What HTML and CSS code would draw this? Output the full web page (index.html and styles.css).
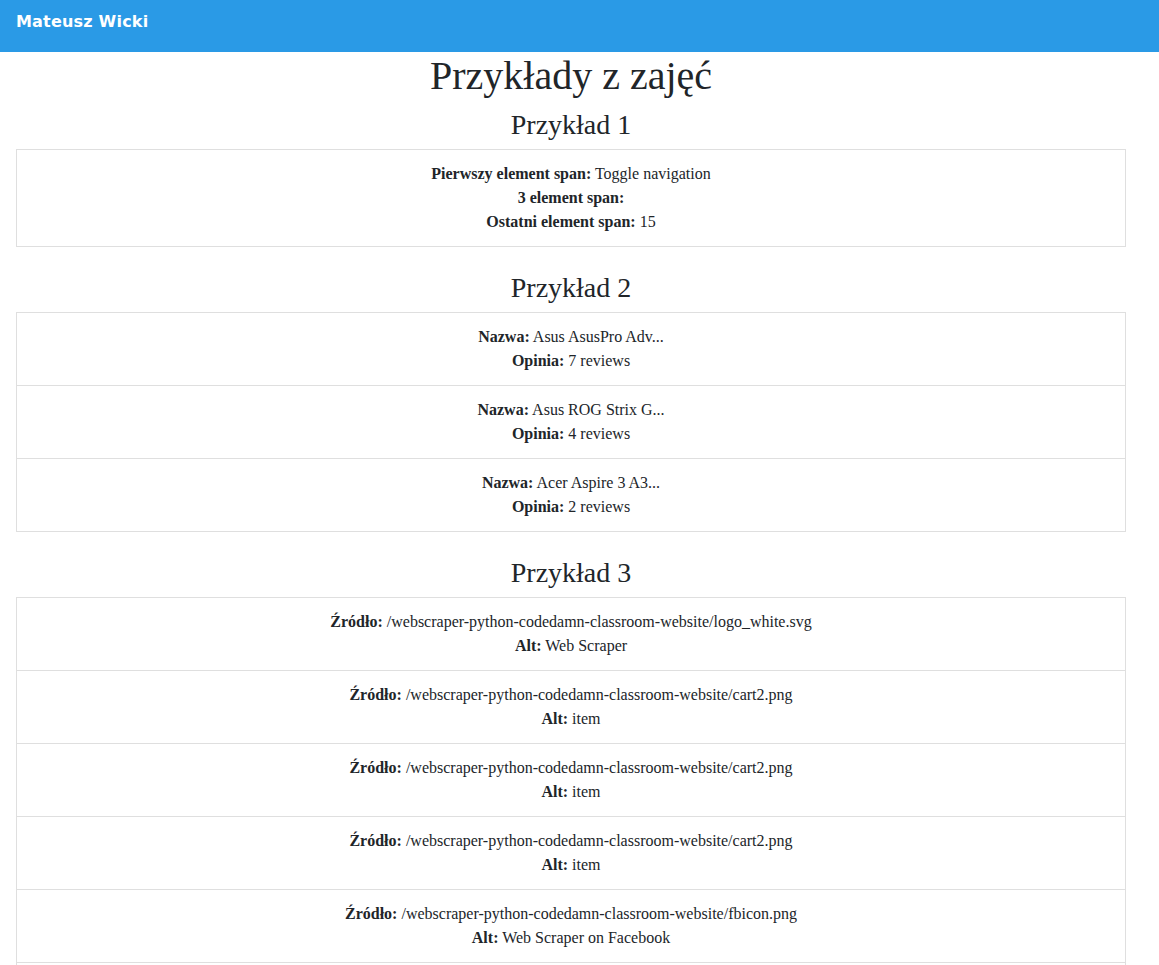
FILE: index.html
```html
<!DOCTYPE html>
<html lang="pl">
<head>
<meta charset="utf-8">
<title>Przykłady z zajęć</title>
<link rel="stylesheet" href="styles.css">
</head>
<body>
<nav class="navbar"><span class="brand">Mateusz Wicki</span></nav>
<main class="content">
  <h1 class="title">Przykłady z zajęć</h1>

  <section class="example">
    <h3 class="example-title">Przykład 1</h3>
    <ul class="list-group">
      <li class="list-item">
        <div><b>Pierwszy element span:</b> Toggle navigation</div>
        <div><b>3 element span:</b> </div>
        <div><b>Ostatni element span:</b> 15</div>
      </li>
    </ul>
  </section>

  <section class="example">
    <h3 class="example-title">Przykład 2</h3>
    <ul class="list-group">
      <li class="list-item">
        <div><b>Nazwa:</b> Asus AsusPro Adv...</div>
        <div><b>Opinia:</b> 7 reviews</div>
      </li>
      <li class="list-item">
        <div><b>Nazwa:</b> Asus ROG Strix G...</div>
        <div><b>Opinia:</b> 4 reviews</div>
      </li>
      <li class="list-item">
        <div><b>Nazwa:</b> Acer Aspire 3 A3...</div>
        <div><b>Opinia:</b> 2 reviews</div>
      </li>
    </ul>
  </section>

  <section class="example">
    <h3 class="example-title">Przykład 3</h3>
    <ul class="list-group">
      <li class="list-item">
        <div><b>Źródło:</b> /webscraper-python-codedamn-classroom-website/logo_white.svg</div>
        <div><b>Alt:</b> Web Scraper</div>
      </li>
      <li class="list-item">
        <div><b>Źródło:</b> /webscraper-python-codedamn-classroom-website/cart2.png</div>
        <div><b>Alt:</b> item</div>
      </li>
      <li class="list-item">
        <div><b>Źródło:</b> /webscraper-python-codedamn-classroom-website/cart2.png</div>
        <div><b>Alt:</b> item</div>
      </li>
      <li class="list-item">
        <div><b>Źródło:</b> /webscraper-python-codedamn-classroom-website/cart2.png</div>
        <div><b>Alt:</b> item</div>
      </li>
      <li class="list-item">
        <div><b>Źródło:</b> /webscraper-python-codedamn-classroom-website/fbicon.png</div>
        <div><b>Alt:</b> Web Scraper on Facebook</div>
      </li>
      <li class="list-item">
        <div><b>Źródło:</b> /webscraper-python-codedamn-classroom-website/twicon.png</div>
        <div><b>Alt:</b> Web Scraper on Twitter</div>
      </li>
    </ul>
  </section>
</main>
</body>
</html>
```

FILE: styles.css
```css
html, body {
  margin: 0;
  padding: 0;
  background: #fff;
}
body {
  font-family: "Liberation Serif", "Times New Roman", serif;
  font-size: 16px;
  line-height: 1.5;
  color: #212529;
}
.navbar {
  height: 52px;
  background: #2a9ae6;
  display: flex;
  align-items: center;
  padding: 0 16px;
  box-sizing: border-box;
}
.brand {
  font-family: "DejaVu Sans", sans-serif;
  font-weight: bold;
  font-size: 16px;
  letter-spacing: 0.2px;
  color: #fff;
  padding-bottom: 8px;
}
.content {
  width: 1110px;
  margin-left: 16px;
}
.title {
  font-size: 40px;
  font-weight: 500;
  line-height: 48px;
  margin: 0 0 8px;
  text-align: center;
}
.example {
  margin-bottom: 24px;
}
.example-title {
  font-size: 28px;
  font-weight: 500;
  line-height: 33px;
  margin: 0 0 8px;
  text-align: center;
}
.list-group {
  list-style: none;
  margin: 0;
  padding: 0;
}
.list-item {
  border: 1px solid rgba(0, 0, 0, 0.125);
  padding: 12px 20px;
  text-align: center;
}
.list-item + .list-item {
  border-top-width: 0;
}
b {
  font-weight: bold;
}
```
